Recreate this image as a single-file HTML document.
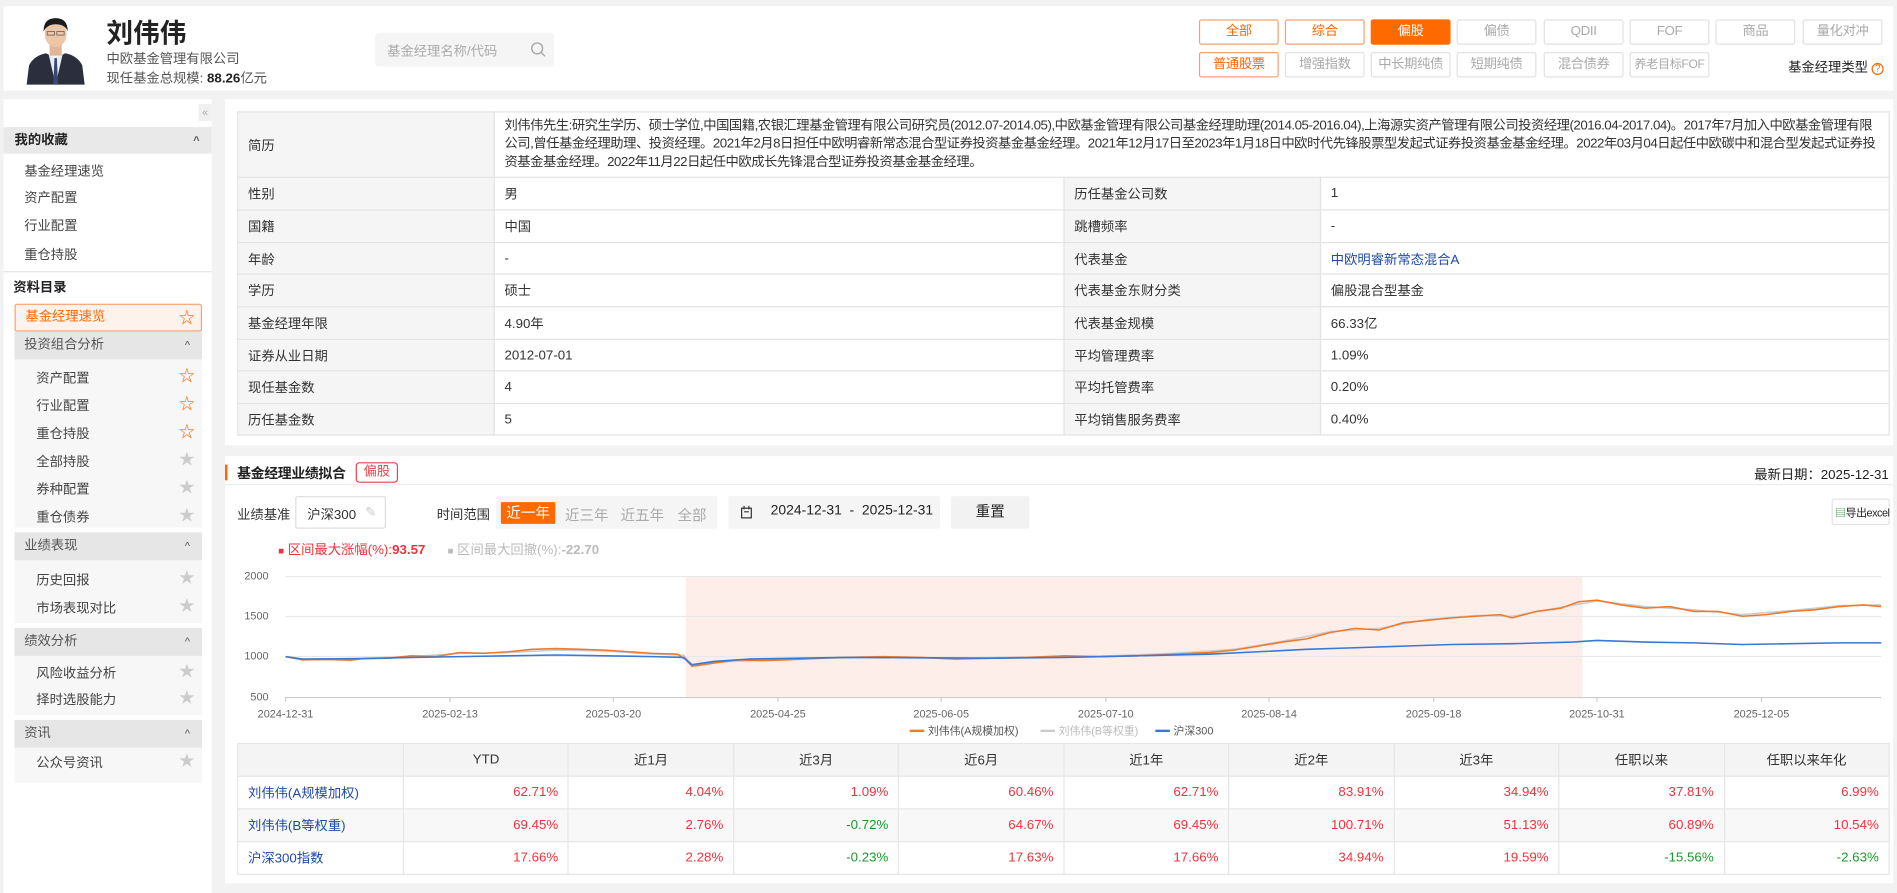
<!DOCTYPE html>
<html><head><meta charset="utf-8">
<style>
*{box-sizing:border-box;margin:0;padding:0}
html,body{width:1897px;height:893px;overflow:hidden;background:#f2f2f2}
body{font-family:"Liberation Sans","Noto Sans CJK SC",sans-serif;color:#333}
#w{position:absolute;left:0;top:0;width:1568px;height:738px;transform:scale(1.2098,1.2100);transform-origin:0 0;font-size:11px}
.a{position:absolute;white-space:nowrap}
.card{position:absolute;background:#fff}
.btn{position:absolute;width:66px;height:21px;border:1px solid #e2e2e2;border-radius:2px;text-align:center;line-height:19px;font-size:11px;color:#aaa;background:#fff;white-space:nowrap;overflow:hidden;letter-spacing:-0.3px}
.btn.o{border-color:#f5a271;color:#f60}
.btn.f{background:#ff6a00;border-color:#ff6a00;color:#fff}
.sh{position:absolute;left:3px;width:172px;height:22px;background:#e9e9e9;line-height:22px;padding-left:9px;font-weight:bold;font-size:11px;color:#222}
.gh{position:absolute;left:12px;width:155px;height:23px;background:#e6e6e6;line-height:23px;padding-left:8px;color:#555}
.car{position:absolute;right:10px;top:0;font-size:9px;color:#555}
.it{position:absolute;font-size:11px;color:#444}
.st{position:absolute;left:148px;font-size:13px;line-height:13px}
table{border-collapse:collapse;table-layout:fixed}
.it1 td{border:1px solid #e3e3e3;font-size:11px;padding-left:8px;color:#333}
.it1 td.l{background:#f5f5f5}
.pt td{border:1px solid #e6e6e6;height:27px;font-size:11px;text-align:right;padding-right:8px;color:#f0323c}
.pt tr.h td{background:#f4f4f4;text-align:center;color:#333;padding:0}
.pt td.n{text-align:left;padding-left:8px;color:#1f4aa8}
.pt td.g{color:#1a9a2a}
.pt tr.z td{background:#f8f8f8}
</style></head><body><div id="w">
<!-- header -->
<div class="card" style="left:3px;top:5px;width:1562px;height:70px"></div>
<svg class="a" style="left:20px;top:8px" width="52" height="62" viewBox="0 0 52 62">
<path d="M2 62 L4 46 Q8 38 18 36 L26 40 L34 36 Q44 38 48 46 L50 62Z" fill="#2b2f3d"/>
<path d="M20 36 L26 62 L32 36 L26 40Z" fill="#e8eef5"/>
<path d="M25 40 L27 40 L28 62 L24 62Z" fill="#3a4a78"/>
<rect x="21" y="28" width="10" height="10" fill="#e0b79a"/>
<ellipse cx="26" cy="20" rx="9" ry="11" fill="#edc6a8"/>
<path d="M16 18 Q16 7 26 7 Q36 7 36 18 Q34 12 26 12 Q19 12 16 18Z" fill="#1c1c1c"/>
<rect x="19" y="18" width="6" height="3" fill="none" stroke="#555" stroke-width=".6"/><rect x="27" y="18" width="6" height="3" fill="none" stroke="#555" stroke-width=".6"/>
</svg>
<div class="a" style="left:88px;top:10px;font-size:22px;font-weight:bold;color:#222">刘伟伟</div>
<div class="a" style="left:88px;top:40px;font-size:11px;color:#555">中欧基金管理有限公司</div>
<div class="a" style="left:88px;top:56px;font-size:11px;color:#555">现任基金总规模: <span style="color:#222;font-weight:bold">88.26</span>亿元</div>
<div class="a" style="left:310px;top:27px;width:148px;height:28px;background:#f5f5f5;border-radius:3px"></div>
<div class="a" style="left:320px;top:34px;font-size:11px;color:#aaa">基金经理名称/代码</div>
<svg class="a" style="left:438px;top:34px" width="14" height="14"><circle cx="6" cy="6" r="4.5" fill="none" stroke="#aaa" stroke-width="1.2"/><line x1="9.3" y1="9.3" x2="12.5" y2="12.5" stroke="#aaa" stroke-width="1.2"/></svg>

<div class="btn o" style="left:991px;top:16px">全部</div>
<div class="btn o" style="left:1062px;top:16px">综合</div>
<div class="btn f" style="left:1133px;top:16px">偏股</div>
<div class="btn" style="left:1204px;top:16px">偏债</div>
<div class="btn" style="left:1276px;top:16px">QDII</div>
<div class="btn" style="left:1347px;top:16px">FOF</div>
<div class="btn" style="left:1418px;top:16px">商品</div>
<div class="btn" style="left:1490px;top:16px">量化对冲</div>
<div class="btn o" style="left:991px;top:43px">普通股票</div>
<div class="btn" style="left:1062px;top:43px">增强指数</div>
<div class="btn" style="left:1133px;top:43px">中长期纯债</div>
<div class="btn" style="left:1204px;top:43px">短期纯债</div>
<div class="btn" style="left:1276px;top:43px">混合债券</div>
<div class="btn" style="left:1347px;top:43px;font-size:10px">养老目标FOF</div>
<div class="a" style="left:1478px;top:47px;font-size:11px;color:#222">基金经理类型 <span style="display:inline-block;width:10px;height:10px;border:1px solid #f60;border-radius:50%;color:#f60;font-size:8px;line-height:8px;text-align:center">?</span></div>

<!-- sidebar -->
<div class="card" style="left:3px;top:82px;width:172px;height:656px"></div>
<div class="a" style="left:164px;top:86px;width:11px;height:14px;background:#f0f0f0;color:#aaa;font-size:9px;text-align:center;line-height:14px">«</div>
<div class="sh" style="top:105px">我的收藏<span class="car">^</span></div>
<div class="it" style="left:20px;top:133px">基金经理速览</div>
<div class="it" style="left:20px;top:155px">资产配置</div>
<div class="it" style="left:20px;top:178px">行业配置</div>
<div class="it" style="left:20px;top:202px">重仓持股</div>
<div class="a" style="left:3px;top:224px;width:172px;height:1px;background:#e6e6e6"></div>
<div class="a" style="left:11px;top:229px;font-weight:bold;color:#222">资料目录</div>
<div class="a" style="left:12px;top:251px;width:155px;height:396px;background:#f7f7f7"></div>
<div class="a" style="left:12px;top:251px;width:155px;height:23px;background:#fdf2ec;border:1px solid #f5a271;border-radius:2px;color:#f60;line-height:21px;padding-left:8px">基金经理速览<span style="position:absolute;left:135px;top:0;font-size:13px">☆</span></div>
<div class="gh" style="top:274px">投资组合分析<span class="car">^</span></div>
<div class="it" style="left:30px;top:304px">资产配置</div><div class="st" style="top:304px;color:#f60">☆</div>
<div class="it" style="left:30px;top:327px">行业配置</div><div class="st" style="top:327px;color:#f60">☆</div>
<div class="it" style="left:30px;top:350px">重仓持股</div><div class="st" style="top:350px;color:#f60">☆</div>
<div class="it" style="left:30px;top:373px">全部持股</div><div class="st" style="top:373px;color:#ccc">★</div>
<div class="it" style="left:30px;top:396px">券种配置</div><div class="st" style="top:396px;color:#ccc">★</div>
<div class="it" style="left:30px;top:419px">重仓债券</div><div class="st" style="top:419px;color:#ccc">★</div>
<div class="a" style="left:12px;top:436px;width:155px;height:4px;background:#fff"></div>
<div class="gh" style="top:440px">业绩表现<span class="car">^</span></div>
<div class="it" style="left:30px;top:471px">历史回报</div><div class="st" style="top:471px;color:#ccc">★</div>
<div class="it" style="left:30px;top:494px">市场表现对比</div><div class="st" style="top:494px;color:#ccc">★</div>
<div class="a" style="left:12px;top:515px;width:155px;height:4px;background:#fff"></div>
<div class="gh" style="top:519px">绩效分析<span class="car">^</span></div>
<div class="it" style="left:30px;top:548px">风险收益分析</div><div class="st" style="top:548px;color:#ccc">★</div>
<div class="it" style="left:30px;top:570px">择时选股能力</div><div class="st" style="top:570px;color:#ccc">★</div>
<div class="a" style="left:12px;top:591px;width:155px;height:4px;background:#fff"></div>
<div class="gh" style="top:595px">资讯<span class="car">^</span></div>
<div class="it" style="left:30px;top:622px">公众号资讯</div><div class="st" style="top:622px;color:#ccc">★</div>

<!-- info card -->
<div class="card" style="left:186px;top:82px;width:1379px;height:286px"></div>
<table class="a it1" style="left:196px;top:92px;width:1366px;white-space:normal">
<colgroup><col style="width:212px"><col style="width:471px"><col style="width:212px"><col></colgroup>
<tr style="height:54px"><td class="l">简历</td><td colspan="3" style="line-height:15px;padding-right:4px;letter-spacing:-0.4px;white-space:normal">刘伟伟先生:研究生学历、硕士学位,中国国籍,农银汇理基金管理有限公司研究员(2012.07-2014.05),中欧基金管理有限公司基金经理助理(2014.05-2016.04),上海源实资产管理有限公司投资经理(2016.04-2017.04)。2017年7月加入中欧基金管理有限公司,曾任基金经理助理、投资经理。2021年2月8日担任中欧明睿新常态混合型证券投资基金基金经理。2021年12月17日至2023年1月18日中欧时代先锋股票型发起式证券投资基金基金经理。2022年03月04日起任中欧碳中和混合型发起式证券投资基金基金经理。2022年11月22日起任中欧成长先锋混合型证券投资基金基金经理。</td></tr>
<tr style="height:27px"><td class="l">性别</td><td>男</td><td class="l">历任基金公司数</td><td>1</td></tr>
<tr style="height:27px"><td class="l">国籍</td><td>中国</td><td class="l">跳槽频率</td><td>-</td></tr>
<tr style="height:26px"><td class="l">年龄</td><td>-</td><td class="l">代表基金</td><td style="color:#1f4aa8">中欧明睿新常态混合A</td></tr>
<tr style="height:27px"><td class="l">学历</td><td>硕士</td><td class="l">代表基金东财分类</td><td>偏股混合型基金</td></tr>
<tr style="height:27px"><td class="l">基金经理年限</td><td>4.90年</td><td class="l">代表基金规模</td><td>66.33亿</td></tr>
<tr style="height:26px"><td class="l">证券从业日期</td><td>2012-07-01</td><td class="l">平均管理费率</td><td>1.09%</td></tr>
<tr style="height:27px"><td class="l">现任基金数</td><td>4</td><td class="l">平均托管费率</td><td>0.20%</td></tr>
<tr style="height:26px"><td class="l">历任基金数</td><td>5</td><td class="l">平均销售服务费率</td><td>0.40%</td></tr>
</table>

<!-- perf card -->
<div class="card" style="left:186px;top:377px;width:1379px;height:353px"></div>
<div class="a" style="left:186px;top:384px;width:2px;height:13px;background:#f60"></div>
<div class="a" style="left:196px;top:383px;font-size:11.5px;font-weight:bold;color:#222;letter-spacing:-0.3px">基金经理业绩拟合</div>
<div class="a" style="left:294px;top:382px;width:35px;height:17px;border:1px solid #e0474c;border-radius:3px;color:#e0474c;text-align:center;line-height:15px">偏股</div>
<div class="a" style="left:1450px;top:384px;color:#222">最新日期：2025-12-31</div>
<div class="a" style="left:186px;top:400px;width:1379px;height:1px;background:#eee"></div>
<div class="a" style="left:196px;top:417px">业绩基准</div>
<div class="a" style="left:244px;top:410px;width:75px;height:27px;border:1px solid #ddd;border-radius:2px;padding:6px 0 0 9px">沪深300<span style="position:absolute;right:7px;top:6px;color:#ccc">✎</span></div>
<div class="a" style="left:361px;top:417px">时间范围</div>
<div class="a" style="left:410px;top:410px;width:183px;height:27px;background:#f5f5f5;border-radius:2px"></div>
<div class="a" style="left:414px;top:415px;width:45px;height:18px;background:#ff6a00;color:#fff;text-align:center;line-height:18px;font-size:12px;border-radius:1px">近一年</div>
<div class="a" style="left:467px;top:417px;color:#aaa;font-size:12px">近三年</div>
<div class="a" style="left:513px;top:417px;color:#aaa;font-size:12px">近五年</div>
<div class="a" style="left:560px;top:417px;color:#aaa;font-size:12px">全部</div>
<div class="a" style="left:602px;top:410px;width:175px;height:27px;background:#f5f5f5;border-radius:2px"></div>
<svg class="a" style="left:612px;top:418px" width="10" height="11"><rect x="1" y="2" width="8" height="8" fill="none" stroke="#333"/><line x1="3" y1="0" x2="3" y2="3" stroke="#333"/><line x1="7" y1="0" x2="7" y2="3" stroke="#333"/><line x1="3" y1="5" x2="7" y2="5" stroke="#333"/></svg>
<div class="a" style="left:637px;top:416px;font-size:11.5px;color:#222">2024-12-31&nbsp; - &nbsp;2025-12-31</div>
<div class="a" style="left:786px;top:410px;width:65px;height:27px;background:#f2f2f2;border-radius:2px;text-align:center;line-height:27px;font-size:12px;color:#222">重置</div>
<div class="a" style="left:1514px;top:412px;width:48px;height:22px;border:1px solid #e3e3e3;border-radius:2px"></div>
<div class="a" style="left:1517px;top:417px;font-size:9px;color:#222;letter-spacing:-0.4px"><span style="color:#2a8a3a">▤</span>导出excel</div>
<div class="a" style="left:230px;top:446px;color:#f0323c;font-size:11px"><span style="font-size:8px">■</span> 区间最大涨幅(%):<b>93.57</b></div>
<div class="a" style="left:370px;top:446px;color:#bbb;font-size:11px"><span style="font-size:8px">■</span> 区间最大回撤(%):<b>-22.70</b></div>

<svg class="a" style="left:0;top:0" width="1568" height="738">
<rect x="567" y="476" width="741" height="100" fill="#fdeeea"/>
<g stroke="#e8e8e8" stroke-width="1">
<line x1="236" y1="476.5" x2="1555" y2="476.5"/><line x1="236" y1="509.5" x2="1555" y2="509.5"/><line x1="236" y1="542.5" x2="1555" y2="542.5"/>
</g>
<line x1="236" y1="576.5" x2="1555" y2="576.5" stroke="#ccc"/>
<g stroke="#ccc">
<line x1="236" y1="576" x2="236" y2="580"/><line x1="372" y1="576" x2="372" y2="580"/><line x1="507" y1="576" x2="507" y2="580"/><line x1="643" y1="576" x2="643" y2="580"/><line x1="778" y1="576" x2="778" y2="580"/><line x1="914" y1="576" x2="914" y2="580"/><line x1="1049" y1="576" x2="1049" y2="580"/><line x1="1185" y1="576" x2="1185" y2="580"/><line x1="1320" y1="576" x2="1320" y2="580"/><line x1="1456" y1="576" x2="1456" y2="580"/>
</g>
<g font-size="9" fill="#666" font-family="Liberation Sans,sans-serif" text-anchor="end">
<text x="222" y="479">2000</text><text x="222" y="512">1500</text><text x="222" y="545">1000</text><text x="222" y="579">500</text>
</g>
<g font-size="9" fill="#666" font-family="Liberation Sans,sans-serif" text-anchor="middle">
<text x="236" y="593">2024-12-31</text><text x="372" y="593">2025-02-13</text><text x="507" y="593">2025-03-20</text><text x="643" y="593">2025-04-25</text><text x="778" y="593">2025-06-05</text><text x="914" y="593">2025-07-10</text><text x="1049" y="593">2025-08-14</text><text x="1185" y="593">2025-09-18</text><text x="1320" y="593">2025-10-31</text><text x="1456" y="593">2025-12-05</text>
</g>
<g transform="translate(0,576) scale(1,-0.0667) translate(0,-500)" fill="none" stroke-width="1.3">
<polyline vector-effect="non-scaling-stroke" stroke="#ccc" points="236,1000 250,965 300,980 340,1000 380,1040 420,1050 460,1080 500,1070 540,1030 565,1020 572,890 590,930 630,955 680,985 730,1000 790,980 850,995 910,1005 970,1040 1020,1090 1060,1190 1100,1310 1140,1350 1180,1460 1220,1510 1250,1500 1290,1610 1320,1690 1360,1620 1400,1580 1440,1520 1480,1570 1520,1630 1555,1640"/>
<polyline vector-effect="non-scaling-stroke" stroke="#f07a2c" points="236,1000 250,960 270,965 290,955 300,975 320,980 340,1010 360,1000 380,1050 400,1040 420,1060 440,1090 460,1100 480,1090 500,1080 520,1060 540,1040 560,1030 567,960 572,880 590,920 610,960 630,950 650,960 680,980 700,990 730,1000 760,990 790,970 820,980 850,990 880,1010 910,1000 940,1010 970,1030 1000,1050 1020,1080 1040,1130 1060,1180 1080,1220 1100,1300 1120,1350 1140,1330 1160,1420 1180,1450 1200,1480 1220,1500 1240,1520 1250,1480 1270,1560 1290,1600 1305,1680 1320,1700 1340,1640 1360,1600 1380,1620 1400,1560 1420,1560 1440,1500 1460,1520 1480,1560 1500,1580 1520,1620 1540,1640 1555,1620"/>
<polyline vector-effect="non-scaling-stroke" stroke="#3a78d6" points="236,1000 250,970 300,975 340,990 380,1000 420,1010 460,1020 500,1010 540,1000 565,990 572,900 590,940 620,970 660,980 700,990 760,985 820,980 880,990 940,1010 1000,1030 1040,1060 1080,1090 1120,1110 1160,1130 1200,1150 1250,1160 1300,1180 1320,1200 1360,1180 1400,1170 1440,1150 1480,1160 1520,1170 1555,1170"/>
</g>
<g font-size="9" fill="#555" font-family="Liberation Sans,Noto Sans CJK SC,sans-serif">
<line x1="752" y1="604" x2="764" y2="604" stroke="#f07a2c" stroke-width="2"/><text x="767" y="607">刘伟伟(A规模加权)</text>
<line x1="860" y1="604" x2="872" y2="604" stroke="#ccc" stroke-width="2"/><text x="875" y="607" fill="#bbb">刘伟伟(B等权重)</text>
<line x1="955" y1="604" x2="967" y2="604" stroke="#3a78d6" stroke-width="2"/><text x="970" y="607">沪深300</text>
</g>
</svg>

<table class="a pt" style="left:196px;top:614px;width:1366px">
<colgroup><col style="width:137px"><col><col><col><col><col><col><col><col><col></colgroup>
<tr class="h"><td></td><td>YTD</td><td>近1月</td><td>近3月</td><td>近6月</td><td>近1年</td><td>近2年</td><td>近3年</td><td>任职以来</td><td>任职以来年化</td></tr>
<tr><td class="n">刘伟伟(A规模加权)</td><td>62.71%</td><td>4.04%</td><td>1.09%</td><td>60.46%</td><td>62.71%</td><td>83.91%</td><td>34.94%</td><td>37.81%</td><td>6.99%</td></tr>
<tr class="z"><td class="n">刘伟伟(B等权重)</td><td>69.45%</td><td>2.76%</td><td class="g">-0.72%</td><td>64.67%</td><td>69.45%</td><td>100.71%</td><td>51.13%</td><td>60.89%</td><td>10.54%</td></tr>
<tr><td class="n">沪深300指数</td><td>17.66%</td><td>2.28%</td><td class="g">-0.23%</td><td>17.63%</td><td>17.66%</td><td>34.94%</td><td>19.59%</td><td class="g">-15.56%</td><td class="g">-2.63%</td></tr>
</table>
</div></body></html>
